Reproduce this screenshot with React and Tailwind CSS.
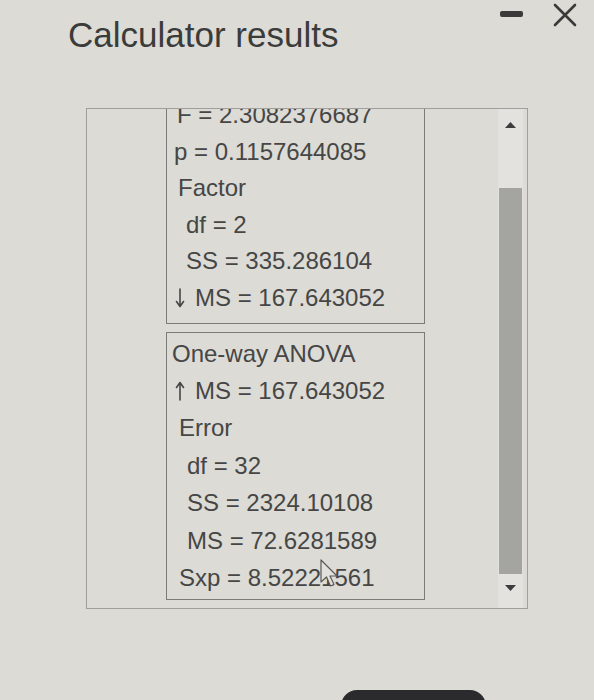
import React from "react";

function Line({ pl, children, extra = "" }) {
  return (
    <div className={`whitespace-nowrap ${pl} ${extra}`}>{children}</div>
  );
}

function Arrow({ dir }) {
  return (
    <span className="inline-block w-[22px] align-middle">
      <svg width="12" height="20" viewBox="0 0 12 20" fill="none" stroke="#464646" strokeWidth="1.6" strokeLinecap="round" strokeLinejoin="round" className="block ml-[1px] mb-[3px]">
        {dir === "up" ? (
          <path d="M6 19 L6 2 M2.5 6.5 L6 1.5 L9.5 6.5" />
        ) : (
          <path d="M6 1 L6 18 M2.5 13.5 L6 18.5 L9.5 13.5" />
        )}
      </svg>
    </span>
  );
}

export default function App() {
  return (
    <div className="w-[594px] h-[700px] bg-[#dcdbd5] flex flex-col overflow-hidden font-['Liberation_Sans',Arial,sans-serif] text-[#464646]">
      {/* header */}
      <div className="flex items-start h-[108px] shrink-0">
        <h1 className="ml-[68px] mt-[15px] text-[35px] leading-[40px] text-[#3b3b3b] font-normal">
          Calculator results
        </h1>
        <div className="ml-auto mr-[17px] mt-[3px] flex items-start">
          <div className="mt-[8px] w-[23px] h-[6px] rounded-[2px] bg-[#3a3a3a]" />
          <svg
            className="ml-[30px]"
            width="24"
            height="24"
            viewBox="0 0 24 24"
            fill="none"
            stroke="#3a3a3a"
            strokeWidth="2.6"
            strokeLinecap="round"
          >
            <path d="M2 2 L22 22 M22 2 L2 22" />
          </svg>
        </div>
      </div>

      {/* outer results box */}
      <div className="ml-[86px] w-[442px] h-[501px] shrink-0 border border-[#a09f9b] flex">
        <div className="flex-1 overflow-hidden">
          <div className="ml-[79px] w-[259px] mt-[-15px] text-[24px]">
            {/* box 1 */}
            <div className="border border-[#7b7b79] pt-[2px] pb-[6px] leading-[36.6px]">
              <Line pl="pl-[10px]">F = 2.3082376687</Line>
              <Line pl="pl-[7px]">p = 0.1157644085</Line>
              <Line pl="pl-[11px]">Factor</Line>
              <Line pl="pl-[19px]">df = 2</Line>
              <Line pl="pl-[19px]">SS = 335.286104</Line>
              <Line pl="pl-[6px]">
                <Arrow dir="down" />MS = 167.643052
              </Line>
            </div>
            {/* box 2 */}
            <div className="mt-[8px] border border-[#7b7b79] pt-[2px] pb-[3px] leading-[37.4px]">
              <Line pl="pl-[5px]">One-way ANOVA</Line>
              <Line pl="pl-[6px]">
                <Arrow dir="up" />MS = 167.643052
              </Line>
              <Line pl="pl-[12px]">Error</Line>
              <Line pl="pl-[20px]">df = 32</Line>
              <Line pl="pl-[20px]">SS = 2324.10108</Line>
              <Line pl="pl-[20px]">MS = 72.6281589</Line>
              <Line pl="pl-[12px]" extra="relative">
                Sxp = 8.52221561
                <svg
                  className="absolute left-[153px] top-[0px]"
                  width="22"
                  height="30"
                  viewBox="0 0 22 30"
                >
                  <path
                    d="M1 1 L1 23 L6.5 18 L10.5 27 L14 25.5 L10 17 L17 17 Z"
                    fill="#e2e1dc"
                    stroke="#5a5a5a"
                    strokeWidth="1.2"
                    strokeLinejoin="round"
                  />
                </svg>
              </Line>
            </div>
          </div>
        </div>

        {/* scrollbar */}
        <div className="w-[25px] mr-[4px] bg-[#e3e2de] flex flex-col items-center">
          <svg className="mt-[13px]" width="11" height="6" viewBox="0 0 11 6">
            <path d="M0 6 L5.5 0 L11 6 Z" fill="#3d3d3d" />
          </svg>
          <div className="mt-[60px] w-[23px] h-[386px] bg-[#a4a4a1]" />
          <svg className="mt-[11px]" width="11" height="6" viewBox="0 0 11 6">
            <path d="M0 0 L11 0 L5.5 6 Z" fill="#3d3d3d" />
          </svg>
        </div>
      </div>

      {/* dark shape at bottom edge */}
      <div className="ml-[341px] mt-[81px] w-[145px] h-[30px] shrink-0 rounded-t-[16px] bg-[#2b2b2e]" />
    </div>
  );
}
